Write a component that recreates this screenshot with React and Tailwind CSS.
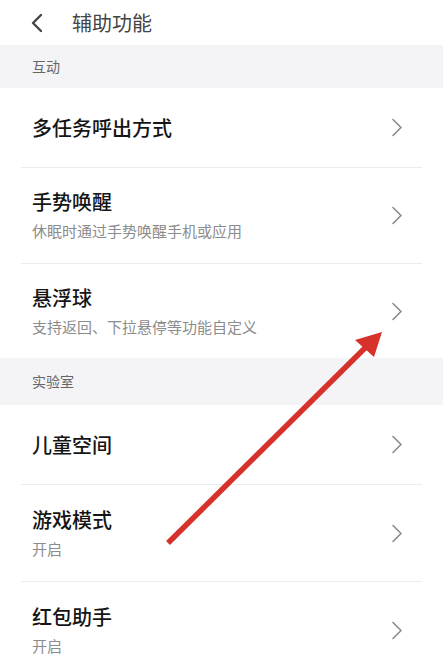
import React from "react";

const font = { fontFamily: '"Noto Sans CJK SC", "Noto Sans", sans-serif' };

function Chevron() {
  return (
    <svg width="12" height="19" viewBox="0 0 12 19" className="shrink-0">
      <path d="M2 1.5 L10 9.5 L2 17.5" fill="none" stroke="#8a8a8a" strokeWidth="1.6" strokeLinecap="round" strokeLinejoin="round" />
    </svg>
  );
}

function Row({ title, sub, h, divider = true }) {
  return (
    <div className={`mx-[21px] flex items-center pl-[11px] pr-[19px] ${divider ? "border-b border-[#ececec]" : ""}`} style={{ height: h }}>
      <div className="flex-1 flex flex-col gap-[7px]">
        <div className="text-[20px] leading-[24px] font-medium text-[#151515]">{title}</div>
        {sub && <div className="text-[15px] leading-[20px] text-[#8c8c8c]">{sub}</div>}
      </div>
      <Chevron />
    </div>
  );
}

function Section({ label, h }) {
  return (
    <div className="bg-[#f4f3f6] flex items-center pl-[32px] text-[14px] text-[#666]" style={{ height: h }}>
      {label}
    </div>
  );
}

export default function App() {
  return (
    <div className="relative w-[443px] h-[669px] overflow-hidden bg-white" style={font}>
      <div className="h-[45px] flex items-center pl-[29px]">
        <svg width="16" height="20" viewBox="0 0 16 20">
          <path d="M12 2 L4 10 L12 18" fill="none" stroke="#444" strokeWidth="2.4" strokeLinecap="round" strokeLinejoin="round" />
        </svg>
        <div className="ml-[27px] text-[20px] text-[#444]">辅助功能</div>
      </div>
      <Section label="互动" h={43} />
      <Row title="多任务呼出方式" h={80} />
      <Row title="手势唤醒" sub="休眠时通过手势唤醒手机或应用" h={96} />
      <Row title="悬浮球" sub="支持返回、下拉悬停等功能自定义" h={94} divider={false} />
      <Section label="实验室" h={47} />
      <Row title="儿童空间" h={80} />
      <Row title="游戏模式" sub="开启" h={97} />
      <Row title="红包助手" sub="开启" h={97} divider={false} />
      <svg className="absolute inset-0 pointer-events-none" width="443" height="669" viewBox="0 0 443 669">
        <line x1="168" y1="543" x2="366" y2="347" stroke="#d6322b" strokeWidth="5.5" />
        <polygon points="382,332 355,340 374,357" fill="#d6322b" />
      </svg>
    </div>
  );
}
